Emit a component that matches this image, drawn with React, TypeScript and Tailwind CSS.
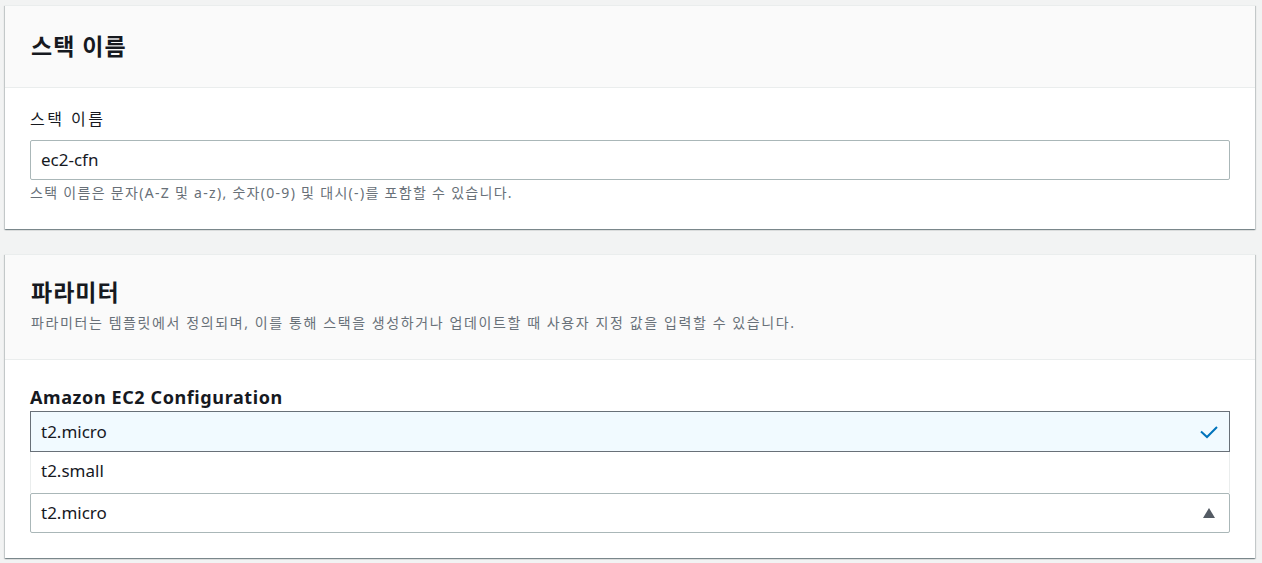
import React from "react";

const font = { fontFamily: '"Noto Sans", "Noto Sans CJK KR", sans-serif' };

function Card({ children }: { children: React.ReactNode }) {
  return (
    <div className="bg-white border-t border-[#eaeded] shadow-[0_1px_1px_0_rgba(0,28,36,0.3),1px_1px_1px_0_rgba(0,28,36,0.15),-1px_1px_1px_0_rgba(0,28,36,0.15)]">
      {children}
    </div>
  );
}

export default function App() {
  return (
    <div className="min-h-[563px] bg-[#f2f3f3] pt-[5px] pl-[5px] pr-[7px] text-[#16191f]" style={font}>
      <div className="flex flex-col gap-[25px]">
        <Card>
          <div className="bg-[#fafafa] border-b border-[#eaeded] px-[26px] pt-[26px] pb-[27px]">
            <h2 className="text-[23px] leading-[28px] font-bold tracking-[1px]">스택 이름</h2>
          </div>
          <div className="px-[25px] pt-[20px] pb-[27px]">
            <div className="text-[16px] leading-[22px] tracking-[2.5px]">스택 이름</div>
            <div className="mt-[10px] h-[40px] border border-[#aab7b8] rounded-[2px] flex items-center px-[10px] text-[17px]">
              ec2-cfn
            </div>
            <div className="mt-[4px] text-[14px] leading-[18px] tracking-[1.3px] text-[#687078]">
              스택 이름은 문자(A-Z 및 a-z), 숫자(0-9) 및 대시(-)를 포함할 수 있습니다.
            </div>
          </div>
        </Card>
        <Card>
          <div className="bg-[#fafafa] border-b border-[#eaeded] px-[26px] pt-[23px] pb-[26px]">
            <h2 className="text-[23px] leading-[28px] font-bold tracking-[1px]">파라미터</h2>
            <p className="mt-[7px] text-[14px] leading-[20px] tracking-[1.6px] text-[#687078]">
              파라미터는 템플릿에서 정의되며, 이를 통해 스택을 생성하거나 업데이트할 때 사용자 지정 값을 입력할 수 있습니다.
            </p>
          </div>
          <div className="px-[25px] pt-[26px] pb-[25px]">
            <div className="text-[18px] leading-[22px] font-bold tracking-[0.6px]">Amazon EC2 Configuration</div>
            <div className="mt-[3px]">
              <div className="h-[41px] bg-[#f1faff] border border-[#687078] flex items-center justify-between px-[10px] text-[17px]">
                <span>t2.micro</span>
                <svg width="20" height="14" viewBox="0 0 20 14">
                  <path d="M2 6.5 L8 12 L18 2" fill="none" stroke="#0073bb" strokeWidth="2" />
                </svg>
              </div>
              <div className="h-[41px] bg-white border-x border-[#eaeded] flex items-center px-[10px] pb-[3px] text-[17px]">
                t2.small
              </div>
              <div className="h-[40px] border border-[#aab7b8] rounded-[2px] flex items-center justify-between px-[10px] text-[17px]">
                <span>t2.micro</span>
                <svg width="14" height="12" viewBox="0 0 14 12" className="mr-[3px]">
                  <path d="M7 1 L13 11 L1 11 Z" fill="#545b64" />
                </svg>
              </div>
            </div>
          </div>
        </Card>
      </div>
    </div>
  );
}
